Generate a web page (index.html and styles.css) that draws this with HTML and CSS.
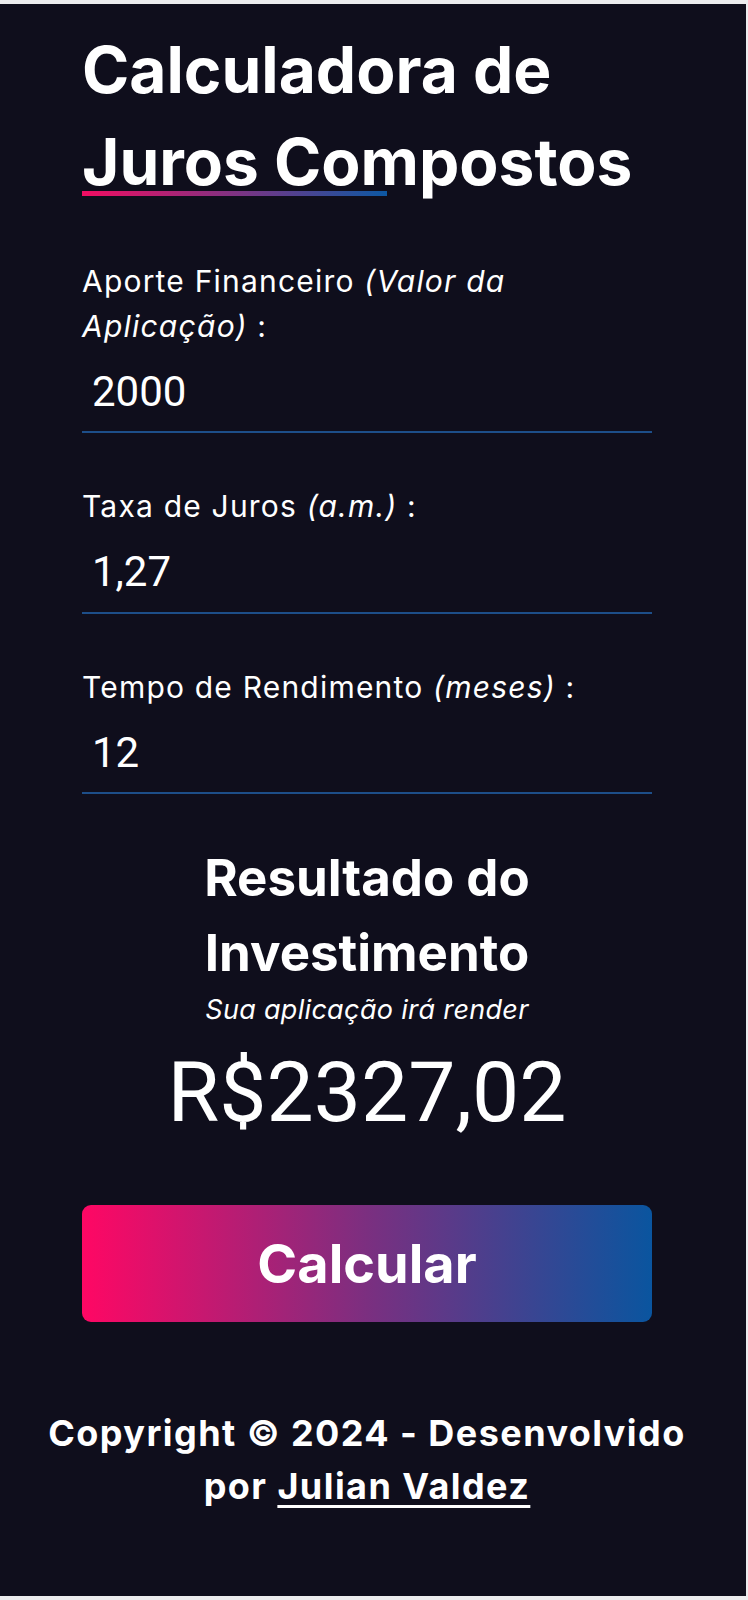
FILE: index.html
```html
<!DOCTYPE html>
<html lang="pt-BR">
<head>
<meta charset="utf-8">
<title>Calculadora de Juros Compostos</title>
<link rel="stylesheet" href="styles.css">
</head>
<body>
<main class="app">
  <div class="column">
    <h1 class="title">Calculadora de Juros Compostos</h1>
    <form class="form">
      <div class="field">
        <label class="label" for="aporte">Aporte Financeiro <i>(Valor da Aplicação)</i> :</label>
        <input class="input" id="aporte" type="text" value="2000">
      </div>
      <div class="field">
        <label class="label" for="taxa">Taxa de Juros <i>(a.m.)</i> :</label>
        <input class="input" id="taxa" type="text" value="1,27">
      </div>
      <div class="field">
        <label class="label" for="tempo">Tempo de Rendimento <i>(meses)</i> :</label>
        <input class="input" id="tempo" type="text" value="12">
      </div>
    </form>
    <section class="result">
      <h2 class="result-title">Resultado do Investimento</h2>
      <p class="result-sub">Sua aplicação irá render</p>
      <p class="result-amount">R$2327,02</p>
    </section>
    <button class="btn" type="button">Calcular</button>
  </div>
  <footer class="footer">Copyright © 2024 - Desenvolvido por <a class="footer-link" href="#">Julian Valdez</a></footer>
</main>
</body>
</html>
```

FILE: styles.css
```css
html, body {
  margin: 0;
  padding: 0;
}
body {
  background: #ececee;
  font-family: "Inter", "Noto Sans", sans-serif;
  color: #ffffff;
}
.app {
  background: #0f0e1c;
  width: 746px;
  height: 1592px;
  margin-top: 4px;
  box-sizing: border-box;
  padding-top: 20px;
}
.column {
  width: 734px;
  box-sizing: border-box;
  padding: 0 82px;
}
.title {
  position: relative;
  margin: 0 0 51px;
  font-size: 64px;
  font-weight: 700;
  line-height: 92px;
  letter-spacing: 0;
}
.title::after {
  content: "";
  position: absolute;
  left: 0;
  bottom: 12px;
  width: 305px;
  height: 5px;
  background: linear-gradient(90deg, #f20d62, #0d58a3);
}
.form {
  display: flex;
  flex-direction: column;
  gap: 51px;
}
.field {
  display: flex;
  flex-direction: column;
  gap: 10px;
}
.label {
  font-size: 30px;
  line-height: 45px;
  font-weight: 400;
  letter-spacing: 0.04em;
}
.label i {
  font-style: italic;
}
.input {
  display: block;
  width: 100%;
  box-sizing: border-box;
  background: transparent;
  border: none;
  border-bottom: 2px solid #1d4e89;
  outline: none;
  color: #ffffff;
  font-family: "Roboto", sans-serif;
  font-size: 42px;
  line-height: 1.2;
  padding: 8px 10px 14px;
  margin: 0;
}
.result {
  margin-top: 46px;
  text-align: center;
}
.result-title {
  margin: 0;
  font-size: 51px;
  line-height: 75px;
  font-weight: 700;
}
.result-sub {
  margin: 0;
  font-size: 27px;
  line-height: 40px;
  font-style: italic;
  letter-spacing: 0.3px;
}
.result-amount {
  margin: 13px 0 0;
  font-family: "Roboto", sans-serif;
  font-size: 84px;
  line-height: 100px;
  font-weight: 400;
}
.btn {
  display: flex;
  align-items: center;
  justify-content: center;
  width: 100%;
  height: 117px;
  margin-top: 62px;
  border: none;
  border-radius: 9px;
  background: linear-gradient(90deg, #ff0764 0%, #7b2f80 50%, #0a559f 100%);
  color: #ffffff;
  font-family: "Inter", sans-serif;
  font-size: 54px;
  font-weight: 700;
  padding: 0;
}
.footer {
  width: 734px;
  box-sizing: border-box;
  padding: 0 30px;
  margin-top: 85px;
  text-align: center;
  font-size: 36px;
  line-height: 53px;
  font-weight: 700;
  letter-spacing: 0.04em;
}
.footer-link {
  color: #ffffff;
  text-decoration: underline;
  text-underline-offset: 6px;
  text-decoration-thickness: 3px;
}
```
